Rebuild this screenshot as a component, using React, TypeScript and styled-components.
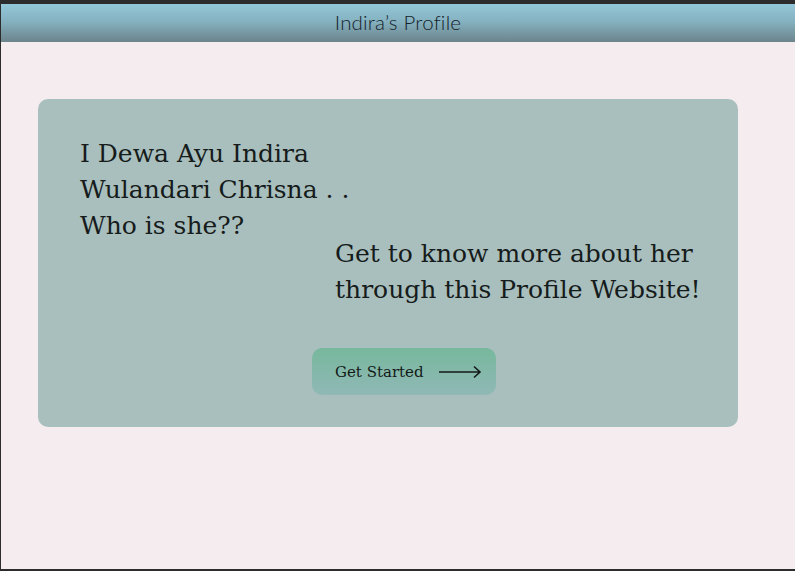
import styled, { createGlobalStyle } from "styled-components";

const GlobalStyle = createGlobalStyle`
  html, body {
    margin: 0;
    padding: 0;
    background: #2c2c2c;
  }
  * {
    box-sizing: border-box;
  }
`;

const Frame = styled.div`
  width: 795px;
  height: 571px;
  padding: 4px 0 2px 1px;
  background: #2c2c2c;
`;

const Screen = styled.main`
  display: flex;
  flex-direction: column;
  height: 100%;
  background: #f4ecee;
`;

const Header = styled.header`
  display: flex;
  align-items: center;
  justify-content: center;
  height: 38px;
  padding-bottom: 3px;
  background: linear-gradient(180deg, #93c7d8 0%, #85b2c1 45%, #6c848b 100%);
`;

const Title = styled.h1`
  margin: 0;
  font-family: "Lato", "Noto Sans", sans-serif;
  font-weight: 300;
  font-size: 20.5px;
  color: #14222a;
  letter-spacing: 0.2px;
`;

const Body = styled.section`
  padding: 57px 57px 0 37px;
`;

const Card = styled.article`
  display: flex;
  flex-direction: column;
  height: 328px;
  padding: 37px 42px 0;
  border-radius: 10px;
  background: #a9bfbd;
`;

const Heading = styled.p`
  margin: 0;
  font-family: "DejaVu Serif", "Liberation Serif", serif;
  font-size: 25px;
  line-height: 36px;
  color: #161b1b;
  width: 320px;
`;

const Lead = styled(Heading)`
  margin: -8px 0 0 255px;
  width: 400px;
`;

const Button = styled.button`
  display: flex;
  align-items: center;
  gap: 14px;
  align-self: flex-start;
  margin: 40px 0 0 232px;
  width: 184px;
  height: 47px;
  padding: 0 0 0 23px;
  border: none;
  border-radius: 10px;
  background: linear-gradient(180deg, #77b89d 0%, #90b8b6 100%);
  font-family: "DejaVu Serif", "Liberation Serif", serif;
  font-size: 15px;
  color: #141a18;
  cursor: pointer;
`;

const Arrow = () => (
  <svg width="44" height="14" viewBox="0 0 44 14" fill="none">
    <path d="M1 7h41M36 1.5L42 7l-6 5.5" stroke="#141a18" strokeWidth="1.6" />
  </svg>
);

export default function App() {
  return (
    <>
      <GlobalStyle />
      <Frame>
        <Screen>
          <Header>
            <Title>Indira’s Profile</Title>
          </Header>
          <Body>
            <Card>
              <Heading>
                I Dewa Ayu Indira
                <br />
                Wulandari Chrisna . .
                <br />
                Who is she??
              </Heading>
              <Lead>
                Get to know more about her
                <br />
                through this Profile Website!
              </Lead>
              <Button>
                Get Started
                <Arrow />
              </Button>
            </Card>
          </Body>
        </Screen>
      </Frame>
    </>
  );
}
